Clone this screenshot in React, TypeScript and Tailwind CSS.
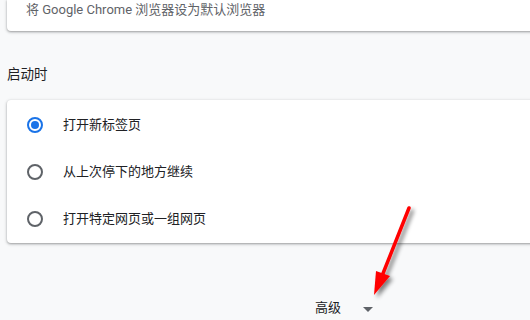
import * as React from 'react'

const options = ['打开新标签页', '从上次停下的地方继续', '打开特定网页或一组网页']

function Radio({ checked }: { checked: boolean }) {
  return (
    <span
      className={`flex h-4 w-4 items-center justify-center rounded-full border-2 ${
        checked ? 'border-[#1a73e8]' : 'border-[#5f6368]'
      }`}
    >
      {checked && <span className="h-2 w-2 rounded-full bg-[#1a73e8]" />}
    </span>
  )
}

export default function App() {
  const [selected, setSelected] = React.useState(0)
  return (
    <div
      className="relative h-[320px] w-[530px] overflow-hidden bg-[#f8f9fa] text-[13px]"
      style={{ fontFamily: 'Roboto, "Noto Sans CJK SC", sans-serif' }}
    >
      <div className="ml-[7px] flex h-[31px] w-[540px] items-start rounded-b-[4px] bg-white pl-[19px] shadow-[0_1px_2px_rgba(60,64,67,0.35),0_1px_3px_1px_rgba(60,64,67,0.15)]">
        <span className="leading-[20px] text-[#5f6368]">将 Google Chrome 浏览器设为默认浏览器</span>
      </div>

      <div className="ml-[7px] mt-[33px] text-[13.5px] leading-[20px] text-[#202124]">启动时</div>

      <div className="ml-[7px] mt-[16px] w-[540px] rounded-[4px] bg-white py-[1px] shadow-[0_1px_2px_rgba(60,64,67,0.35),0_1px_3px_1px_rgba(60,64,67,0.15)]">
        {options.map((label, i) => (
          <div
            key={label}
            className="flex h-[47px] cursor-pointer items-center pl-[20px]"
            onClick={() => setSelected(i)}
          >
            <Radio checked={selected === i} />
            <span className="ml-[20px] text-[#202124]">{label}</span>
          </div>
        ))}
      </div>

      <div className="mt-[55px] flex items-center pl-[315px]">
        <span className="leading-[20px] text-[#202124]">高级</span>
        <svg className="ml-[22px] mt-[2px]" width="10" height="5" viewBox="0 0 10 5">
          <path d="M0 0h10L5 5z" fill="#5f6368" />
        </svg>
      </div>

      <svg
        className="pointer-events-none absolute left-0 top-0"
        width="530"
        height="320"
        viewBox="0 0 530 320"
      >
        <defs>
          <filter id="sh" x="-50%" y="-50%" width="200%" height="200%">
            <feGaussianBlur in="SourceAlpha" stdDeviation="2" />
            <feOffset dx="3" dy="3" result="b" />
            <feComponentTransfer>
              <feFuncA type="linear" slope="0.5" />
            </feComponentTransfer>
            <feMerge>
              <feMergeNode />
              <feMergeNode in="SourceGraphic" />
            </feMerge>
          </filter>
        </defs>
        <g filter="url(#sh)">
          <line x1="409" y1="208" x2="382" y2="276" stroke="#ff0000" strokeWidth="3.5" strokeLinecap="round" />
          <path d="M374 295 L376 271 L390 276 Z" fill="#ff0000" />
        </g>
      </svg>
    </div>
  )
}
